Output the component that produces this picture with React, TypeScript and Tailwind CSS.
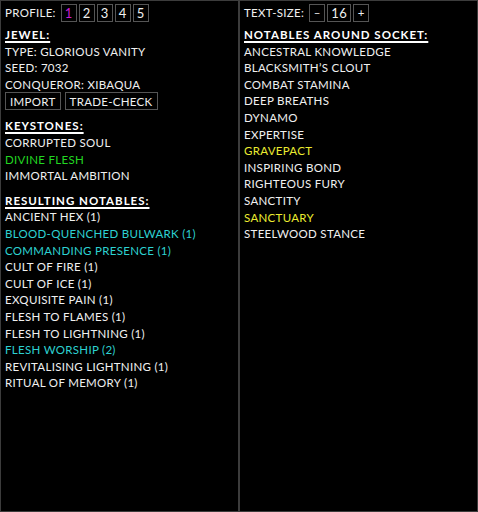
import React from "react";

const keystones: { t: string; c?: string }[] = [
  { t: "Corrupted Soul" },
  { t: "Divine Flesh", c: "text-[#22d822]" },
  { t: "Immortal Ambition" },
];

const notables: { t: string; c?: string }[] = [
  { t: "Ancient Hex (1)" },
  { t: "Blood-Quenched Bulwark (1)", c: "text-[#2dd2d2]" },
  { t: "Commanding Presence (1)", c: "text-[#2dd2d2]" },
  { t: "Cult of Fire (1)" },
  { t: "Cult of Ice (1)" },
  { t: "Exquisite Pain (1)" },
  { t: "Flesh to Flames (1)" },
  { t: "Flesh to Lightning (1)" },
  { t: "Flesh Worship (2)", c: "text-[#2dd2d2]" },
  { t: "Revitalising Lightning (1)" },
  { t: "Ritual of Memory (1)" },
];

const around: { t: string; c?: string }[] = [
  { t: "Ancestral Knowledge" },
  { t: "Blacksmith’s Clout" },
  { t: "Combat Stamina" },
  { t: "Deep Breaths" },
  { t: "Dynamo" },
  { t: "Expertise" },
  { t: "Gravepact", c: "text-[#ecec30]" },
  { t: "Inspiring Bond" },
  { t: "Righteous Fury" },
  { t: "Sanctity" },
  { t: "Sanctuary", c: "text-[#ecec30]" },
  { t: "Steelwood Stance" },
];

function Line({ t, c }: { t: string; c?: string }) {
  return <div className={`h-[16.6px] whitespace-nowrap ${c ?? "text-[#f0f0f0]"}`}>{t}</div>;
}

function Heading({ children, className = "" }: { children: React.ReactNode; className?: string }) {
  return (
    <div
      className={`h-[16.6px] font-bold text-white tracking-[1px] underline decoration-[1.5px] underline-offset-[2px] whitespace-nowrap ${className}`}
    >
      {children}
    </div>
  );
}

function Box({ children, className = "" }: { children: React.ReactNode; className?: string }) {
  return (
    <div
      className={`h-[18px] border border-[#555555] flex items-center justify-center leading-none ${className}`}
    >
      {children}
    </div>
  );
}

export default function App() {
  return (
    <div
      className="w-[478px] h-[512px] bg-black border border-[#3c3c3c] flex text-[11.5px] leading-[16.6px] tracking-[0.3px] uppercase text-[#f0f0f0]"
      style={{ fontFamily: "Lato, 'Noto Sans', sans-serif" }}
    >
      <div className="w-[239px] shrink-0 border-r-2 border-[#3c3c3c] pl-[4px] pt-[3px]">
        <div className="flex items-center h-[18px] gap-[2px]">
          <span className="mr-[3px]">Profile:</span>
          <Box className="w-[16px] text-[#c81ed0] text-[13px]">1</Box>
          <Box className="w-[16px] text-[13px]">2</Box>
          <Box className="w-[16px] text-[13px]">3</Box>
          <Box className="w-[16px] text-[13px]">4</Box>
          <Box className="w-[16px] text-[13px]">5</Box>
        </div>
        <Heading className="mt-[5px]">Jewel:</Heading>
        <Line t="Type: Glorious Vanity" />
        <Line t="Seed: 7032" />
        <Line t="Conqueror: Xibaqua" />
        <div className="flex gap-[4px] mt-[-1px]">
          <Box className="px-[4px]">Import</Box>
          <Box className="px-[4px]">Trade-Check</Box>
        </div>
        <Heading className="mt-[8px]">Keystones:</Heading>
        {keystones.map((k) => (
          <Line key={k.t} {...k} />
        ))}
        <Heading className="mt-[8px]">Resulting Notables:</Heading>
        {notables.map((k) => (
          <Line key={k.t} {...k} />
        ))}
      </div>
      <div className="flex-1 pl-[4px] pt-[3px]">
        <div className="flex items-center h-[18px] gap-[2px]">
          <span className="mr-[3px]">Text-Size:</span>
          <Box className="w-[16px]">–</Box>
          <Box className="w-[24px] text-[13px]">16</Box>
          <Box className="w-[16px]">+</Box>
        </div>
        <Heading className="mt-[5px]">Notables Around Socket:</Heading>
        {around.map((k) => (
          <Line key={k.t} {...k} />
        ))}
      </div>
    </div>
  );
}
